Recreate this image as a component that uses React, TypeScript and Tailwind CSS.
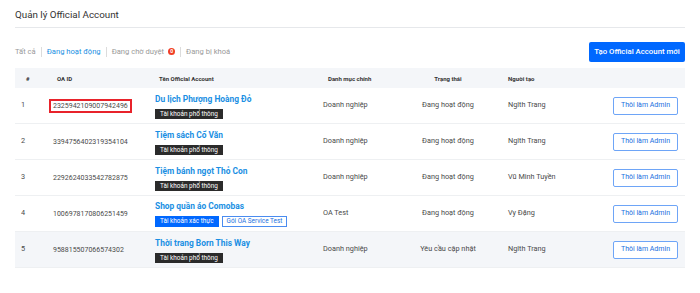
import React from 'react';

type Row = {
  no: number;
  oaId: string;
  name: string;
  category: string;
  status: string;
  creator: string;
  verified?: boolean;
  highlight?: boolean;
  selected?: boolean;
};

const rows: Row[] = [
  { no: 1, oaId: '2325942109007942496', name: 'Du lịch Phượng Hoàng Đỏ', category: 'Doanh nghiệp', status: 'Đang hoạt động', creator: 'Nglth Trang', selected: true },
  { no: 2, oaId: '3394756402319354104', name: 'Tiệm sách Cổ Văn', category: 'Doanh nghiệp', status: 'Đang hoạt động', creator: 'Nglth Trang' },
  { no: 3, oaId: '2292624033542782875', name: 'Tiệm bánh ngọt Thỏ Con', category: 'Doanh nghiệp', status: 'Đang hoạt động', creator: 'Vũ Minh Tuyền' },
  { no: 4, oaId: '1006978170806251459', name: 'Shop quần áo Comobas', category: 'OA Test', status: 'Đang hoạt động', creator: 'Vy Đặng', verified: true },
  { no: 5, oaId: '958815507066574302', name: 'Thời trang Born This Way', category: 'Doanh nghiệp', status: 'Yêu cầu cập nhật', creator: 'Nglth Trang', highlight: true },
];

const cols = 'grid grid-cols-[34px_106px_168px_75px_100px_115px_73px]';

function Tabs() {
  return (
    <div className="flex items-center text-[7.6px] text-[#9a9a9a]">
      <span>Tất cả</span>
      <span className="mx-[5px] h-[10px] w-px bg-[#dcdcdc]" />
      <span className="text-[#1a8fe3]">Đang hoạt động</span>
      <span className="mx-[5px] h-[10px] w-px bg-[#dcdcdc]" />
      <span>Đang chờ duyệt</span>
      <span className="ml-[4px] flex h-[7px] w-[7px] items-center justify-center rounded-full bg-[#f03d25] text-[5px] font-bold leading-none text-white">0</span>
      <span className="mx-[5px] h-[10px] w-px bg-[#dcdcdc]" />
      <span>Đang bị khoá</span>
    </div>
  );
}

export default function App() {
  return (
    <div className="h-[293px] w-[700px] bg-white px-[15px] pt-[7px] text-[#4a4a4a]" style={{ fontFamily: 'Roboto, "Noto Sans", sans-serif' }}>
      <div className="h-[21px] border-b border-[#e6e8eb] text-[9.8px] leading-[15px] text-[#333]">Quản lý Official Account</div>

      <div className="mt-[14px] flex h-[20px] items-center justify-between">
        <Tabs />
        <button className="h-[20px] w-[96px] rounded-[2px] bg-[#0068ff] text-[7.8px] font-medium text-white">Tạo Official Account mới</button>
      </div>

      <div className={`${cols} mt-[6px] h-[20px] items-center bg-[#f4f6f9] text-[6px] font-bold text-[#333]`}>
        <span className="pl-[11px]">#</span>
        <span className="pl-[8px]">OA ID</span>
        <span className="pl-[4px]">Tên Official Account</span>
        <span className="pl-[5px]">Danh mục chính</span>
        <span className="text-center">Trạng thái</span>
        <span className="pl-[10px]">Người tạo</span>
        <span />
      </div>

      {rows.map((r) => (
        <div key={r.no} className={`${cols} h-[36px] items-center border-b border-[#eef0f2] text-[7.3px] ${r.highlight ? 'bg-[#f4f6f9]' : ''}`}>
          <span className="pl-[6px]">{r.no}</span>
          <span>
            <span className={`inline-block border-2 px-[2px] text-[7px] leading-[10px] ${r.selected ? 'border-[#e8232b]' : 'border-transparent'}`}>{r.oaId}</span>
          </span>
          <div className="flex flex-col items-start gap-[4px]">
            <span className="text-[8.4px] font-bold leading-[12px] text-[#1a8fe3]">{r.name}</span>
            {r.verified ? (
              <div className="flex gap-[3px]">
                <span className="bg-[#0068ff] px-[5px] text-[6.4px] leading-[10px] text-white">Tài khoản xác thực</span>
                <span className="border border-[#4a8cf0] px-[4px] text-[6.4px] leading-[9px] text-[#1a6fe0]">Gói OA Service Test</span>
              </div>
            ) : (
              <span className="bg-[#2b2b2b] px-[5px] text-[6.4px] leading-[10px] text-white">Tài khoản phổ thông</span>
            )}
          </div>
          <span>{r.category}</span>
          <span className="text-center">{r.status}</span>
          <span className="pl-[10px]">{r.creator}</span>
          <span>
            <button className="h-[18px] w-[65px] rounded-[2px] border border-[#6ea5f7] bg-white text-[7px] text-[#1a6fe0]">Thôi làm Admin</button>
          </span>
        </div>
      ))}
    </div>
  );
}
